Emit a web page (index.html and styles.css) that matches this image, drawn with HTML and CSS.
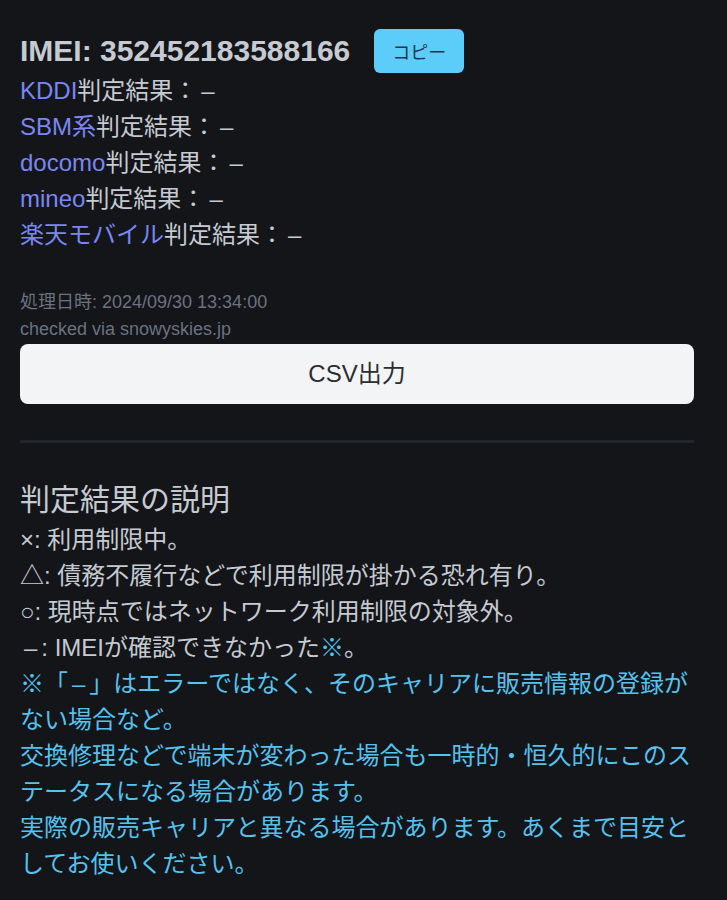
FILE: index.html
```html
<!DOCTYPE html>
<html lang="ja">

<head>
    <meta charset="UTF-8" />
    <title>IMEI判定結果</title>
    <meta name="viewport" content="width=device-width, initial-scale=1" />
    <link rel="stylesheet" href="styles.css">
</head>

<body>
    <div class="container">
        <div class="imei-row">
            <h2 class="imei">IMEI: 352452183588166</h2>
            <button class="btn-copy">コピー</button>
        </div>

        <div class="resultados">
            <p><a href="#" class="carrier">KDDI</a>判定結果：<span class="dash">–</span></p>
            <p><a href="#" class="carrier">SBM系</a>判定結果：<span class="dash">–</span></p>
            <p><a href="#" class="carrier">docomo</a>判定結果：<span class="dash">–</span></p>
            <p><a href="#" class="carrier">mineo</a>判定結果：<span class="dash">–</span></p>
            <p><a href="#" class="carrier">楽天モバイル</a>判定結果：<span class="dash">–</span></p>
        </div>

        <div class="meta">
            <p>処理日時: 2024/09/30 13:34:00</p>
            <p>checked via snowyskies.jp</p>
        </div>

        <button class="btn-csv">CSV出力</button>

        <hr class="divisor" />

        <h3 class="titulo">判定結果の説明</h3>
        <div class="explicacao">
            <p>×: 利用制限中。</p>
            <p>△: 債務不履行などで利用制限が掛かる恐れ有り。</p>
            <p>○: 現時点ではネットワーク利用制限の対象外。</p>
            <p><span class="dash">–</span>: IMEIが確認できなかった<span class="nota">※</span>。</p>
            <p class="nota">※「<span class="dash">–</span>」はエラーではなく、そのキャリアに販売情報の登録がない場合など。</p>
            <p class="nota">交換修理などで端末が変わった場合も一時的・恒久的にこのステータスになる場合があります。</p>
            <p class="nota">実際の販売キャリアと異なる場合があります。あくまで目安としてお使いください。</p>
        </div>
    </div>
</body>

</html>
```

FILE: styles.css
```css
body,
html {
    font-family: "Liberation Sans", "Noto Sans CJK JP", sans-serif;
    background-color: #131519;
    margin: 0;
    padding: 0;
    color: #c6cad1;
}

.container {
    width: 674px;
    padding: 29px 20px 20px;
    font-size: 24px;
    line-height: 36px;
}

p {
    margin: 0;
}

.imei-row {
    display: flex;
    align-items: center;
    gap: 24px;
    height: 44px;
}

.imei {
    margin: 0;
    font-size: 30px;
    font-weight: bold;
    line-height: 44px;
}

.btn-copy {
    width: 90px;
    height: 44px;
    border: none;
    border-radius: 6px;
    background-color: #5ccdf9;
    color: #1d3550;
    font-family: inherit;
    font-size: 18px;
    cursor: pointer;
}

.carrier {
    color: #7b86f2;
    text-decoration: none;
}

.dash {
    padding: 0 4px;
}

.meta {
    margin-top: 36px;
    font-size: 18px;
    line-height: 27px;
    color: #6b7280;
}

.btn-csv {
    display: block;
    width: 100%;
    margin-top: 1px;
    padding: 12px;
    border: none;
    border-radius: 8px;
    background-color: #f3f4f6;
    color: #2b2d31;
    font-family: inherit;
    font-size: 24px;
    line-height: 36px;
    cursor: pointer;
}

.divisor {
    margin: 36px 0 0;
    border: none;
    height: 3px;
    background-color: #22252b;
}

.titulo {
    margin: 34px 0 0;
    font-size: 30px;
    font-weight: normal;
    line-height: 45px;
}

.nota {
    color: #56c2ee;
}
```
